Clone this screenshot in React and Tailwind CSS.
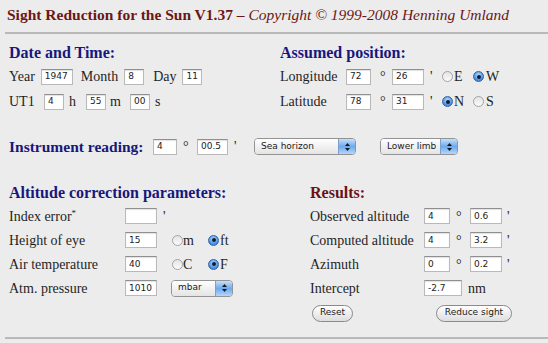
import React from 'react';

const Field = ({ w, children }) => (
    <span className={`${w} h-[16px] shrink-0 flex items-center pl-[3px] bg-white border border-[#b9b9b9] border-t-[#8f8f8f] shadow-[inset_0_1px_1px_rgba(0,0,0,0.12)] font-['DejaVu_Sans',sans-serif] text-[9px] text-[#222] leading-none`}>
        {children}
    </span>
);

const Radio = ({ on }) =>
    on ? (
        <span className="w-[11px] h-[11px] shrink-0 rounded-full border border-[#3263a5] bg-[radial-gradient(circle_at_50%_35%,#b8dcfb,#4589de_70%)] flex items-center justify-center">
            <span className="w-[4px] h-[4px] rounded-full bg-[#0f1d36]" />
        </span>
    ) : (
        <span className="w-[11px] h-[11px] shrink-0 rounded-full border border-[#a3a3a3] bg-gradient-to-b from-[#e4e4e4] to-[#fbfbfb]" />
    );

const Select = ({ w, children }) => (
    <span className={`${w} h-[17px] shrink-0 flex rounded-[4px] border border-[#939393] overflow-hidden`}>
        <span className="flex-1 flex items-center pl-[6px] bg-gradient-to-b from-white to-[#e4e4e4] font-['DejaVu_Sans',sans-serif] text-[9px] text-[#222]">
            {children}
        </span>
        <span className="w-[17px] border-l border-[#7c9fd0] bg-gradient-to-b from-[#c4e1fc] via-[#6ea9ec] to-[#b3d7fb] flex flex-col items-center justify-center gap-[2px]">
            <svg width="5" height="3" viewBox="0 0 5 3"><path d="M0 3 L2.5 0 L5 3Z" fill="#1a1a1a" /></svg>
            <svg width="5" height="3" viewBox="0 0 5 3"><path d="M0 0 L5 0 L2.5 3Z" fill="#1a1a1a" /></svg>
        </span>
    </span>
);

const Btn = ({ w, children }) => (
    <span className={`${w} h-[17px] shrink-0 flex items-center justify-center rounded-full border border-[#8a8a8a] bg-gradient-to-b from-white to-[#dedede] font-['DejaVu_Sans',sans-serif] text-[9px] text-[#222]`}>
        {children}
    </span>
);

const App = () => {
    return (
        <div className="w-[548px] h-[343px] overflow-hidden bg-[#ececec] pl-[5px] font-['Liberation_Serif',serif] text-[14px] text-[#1f1f1f]">
            {/* Title */}
            <div className="pt-[5px] pl-[2px] leading-[20px] text-[15.5px] text-[#6b1717] whitespace-nowrap">
                <span className="font-bold">Sight Reduction for the Sun V1.37 –</span>
                <span className="italic"> Copyright © 1999-2008 Henning Umland</span>
            </div>
            <div className="mt-[7px] h-[2px] bg-[#b9b9b9]" />

            <div className="pl-[4px]">
                {/* Date / position */}
                <div className="flex mt-[9px]">
                    <div className="w-[271px]">
                        <h2 className="text-[16px] font-bold leading-[20px] text-[#17177c]">Date and Time:</h2>
                        <div className="mt-[1px] h-[25px] flex items-center">
                            <span>Year</span>
                            <span className="ml-[6px]" />
                            <Field w="w-[32px]">1947</Field>
                            <span className="ml-[8px]">Month</span>
                            <span className="ml-[6px]" />
                            <Field w="w-[20px]">8</Field>
                            <span className="ml-[9px]">Day</span>
                            <span className="ml-[6px]" />
                            <Field w="w-[20px]">11</Field>
                        </div>
                        <div className="h-[25px] flex items-center">
                            <span className="w-[35px]">UT1</span>
                            <Field w="w-[20px]">4</Field>
                            <span className="w-[22px] pl-[5px]">h</span>
                            <Field w="w-[20px]">55</Field>
                            <span className="w-[24px] pl-[4px]">m</span>
                            <Field w="w-[20px]">00</Field>
                            <span className="pl-[5px]">s</span>
                        </div>
                    </div>
                    <div>
                        <h2 className="text-[16px] font-bold leading-[20px] text-[#17177c]">Assumed position:</h2>
                        <div className="mt-[1px] h-[25px] flex items-center">
                            <span className="w-[66px]">Longitude</span>
                            <Field w="w-[25px]">72</Field>
                            <span className="w-[21px] pl-[9px]">°</span>
                            <Field w="w-[32px]">26</Field>
                            <span className="w-[18px] pl-[6px]">'</span>
                            <Radio />
                            <span className="w-[20px] pl-[1px]">E</span>
                            <Radio on />
                            <span className="pl-[2px]">W</span>
                        </div>
                        <div className="h-[25px] flex items-center">
                            <span className="w-[66px]">Latitude</span>
                            <Field w="w-[25px]">78</Field>
                            <span className="w-[21px] pl-[9px]">°</span>
                            <Field w="w-[32px]">31</Field>
                            <span className="w-[18px] pl-[6px]">'</span>
                            <Radio on />
                            <span className="w-[20px] pl-[1px]">N</span>
                            <Radio />
                            <span className="pl-[2px]">S</span>
                        </div>
                    </div>
                </div>

                {/* Instrument reading */}
                <div className="mt-[20px] h-[25px] flex items-center">
                    <span className="w-[144px] text-[15.5px] font-bold text-[#17177c] whitespace-nowrap">Instrument reading:</span>
                    <Field w="w-[24px]">4</Field>
                    <span className="w-[20px] pl-[6px]">°</span>
                    <Field w="w-[31px]">00.5</Field>
                    <span className="w-[26px] pl-[6px]">'</span>
                    <Select w="w-[102px]">Sea horizon</Select>
                    <span className="w-[24px]" />
                    <Select w="w-[78px]">Lower limb</Select>
                </div>

                {/* Corrections / results */}
                <div className="flex mt-[24px]">
                    <div className="w-[301px]">
                        <h2 className="text-[16px] font-bold leading-[20px] text-[#17177c]">Altitude correction parameters:</h2>
                        <div className="mt-[1px] h-[24px] flex items-center">
                            <span className="w-[116px]">Index error<sup className="text-[9px]">*</sup></span>
                            <Field w="w-[32px]" />
                            <span className="pl-[6px]">'</span>
                        </div>
                        <div className="h-[24px] flex items-center">
                            <span className="w-[116px]">Height of eye</span>
                            <Field w="w-[32px]">15</Field>
                            <span className="w-[15px]" />
                            <Radio />
                            <span className="w-[25px]">m</span>
                            <Radio on />
                            <span className="pl-[1px]">ft</span>
                        </div>
                        <div className="h-[24px] flex items-center">
                            <span className="w-[116px]">Air temperature</span>
                            <Field w="w-[32px]">40</Field>
                            <span className="w-[15px]" />
                            <Radio />
                            <span className="w-[25px]">C</span>
                            <Radio on />
                            <span className="pl-[1px]">F</span>
                        </div>
                        <div className="h-[24px] flex items-center">
                            <span className="w-[116px]">Atm. pressure</span>
                            <Field w="w-[32px]">1010</Field>
                            <span className="w-[14px]" />
                            <Select w="w-[62px]">mbar</Select>
                        </div>
                    </div>
                    <div>
                        <h2 className="text-[16px] font-bold leading-[20px] text-[#6b1313]">Results:</h2>
                        <div className="mt-[1px] h-[24px] flex items-center">
                            <span className="w-[114px] whitespace-nowrap">Observed altitude</span>
                            <Field w="w-[26px]">4</Field>
                            <span className="w-[20px] pl-[6px]">°</span>
                            <Field w="w-[32px]">0.6</Field>
                            <span className="pl-[5px]">'</span>
                        </div>
                        <div className="h-[24px] flex items-center">
                            <span className="w-[114px] whitespace-nowrap">Computed altitude</span>
                            <Field w="w-[26px]">4</Field>
                            <span className="w-[20px] pl-[6px]">°</span>
                            <Field w="w-[32px]">3.2</Field>
                            <span className="pl-[5px]">'</span>
                        </div>
                        <div className="h-[24px] flex items-center">
                            <span className="w-[114px]">Azimuth</span>
                            <Field w="w-[26px]">0</Field>
                            <span className="w-[20px] pl-[6px]">°</span>
                            <Field w="w-[32px]">0.2</Field>
                            <span className="pl-[5px]">'</span>
                        </div>
                        <div className="h-[24px] flex items-center">
                            <span className="w-[114px]">Intercept</span>
                            <Field w="w-[38px]">-2.7</Field>
                            <span className="pl-[6px]">nm</span>
                        </div>
                        <div className="h-[26px] flex items-center">
                            <span className="w-[2px]" />
                            <Btn w="w-[41px]">Reset</Btn>
                            <span className="w-[83px]" />
                            <Btn w="w-[76px]">Reduce sight</Btn>
                        </div>
                    </div>
                </div>
            </div>

            <div className="mt-[11px] h-[2px] bg-[#b9b9b9]" />
        </div>
    );
};

export default App;
